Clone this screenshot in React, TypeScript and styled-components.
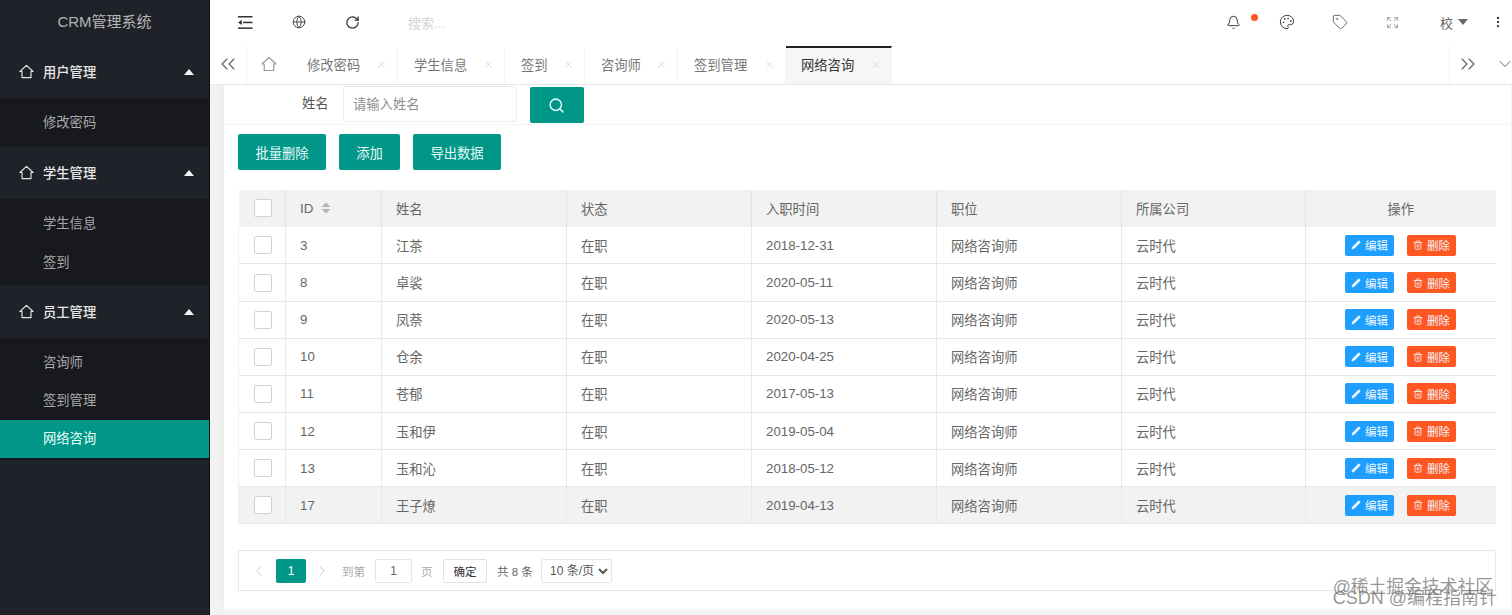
import React from "react";
import styled, { createGlobalStyle } from "styled-components";
import { Bell, Palette, Tag, Globe, RotateCw, Expand, Search, Pencil, Trash2, ChevronsLeft, ChevronsRight, ChevronDown, X, ChevronLeft, ChevronRight, EllipsisVertical } from "lucide-react";

const Global = createGlobalStyle`
  html, body { margin: 0; padding: 0; height: 615px; overflow: hidden; background: #f2f2f2; }
  body, input, select, button { font-family: "Liberation Sans", "Noto Sans CJK SC", sans-serif; }
  * { box-sizing: border-box; }
`;
const Page = styled.div`display: flex; width: 1512px; height: 615px; position: relative; overflow: hidden;`;
const Sidebar = styled.aside`width: 210px; flex: none; background: #20222a; border-right: 1px solid #111; color: #c2c2c2; font-size: 13.3px;`;
const Logo = styled.div`height: 45px; display: flex; align-items: center; justify-content: center; padding-bottom: 5px; font-size: 15px; color: #b4b4b4;`;
const GroupHead = styled.div`height: 53px; display: flex; align-items: center; padding: 0 15px 0 19px; color: #e8e8e8; gap: 9px; font-weight: 500;`;
const Caret = styled.span`margin-left: auto; width: 0; height: 0; border-left: 5.5px solid transparent; border-right: 5.5px solid transparent; border-bottom: 6px solid #f5f5f5;`;
const Sub = styled.div<{ $top?: number; $bottom?: number }>`background: #18191e; padding: ${(p) => p.$top ?? 5}px 0 ${(p) => p.$bottom ?? 5}px;`;
const SubItem = styled.div<{ $active?: boolean; $lift?: number }>`
  height: 38px; display: flex; align-items: center; padding: 0 0 ${(p) => p.$lift ?? 2}px 43px;
  background: ${(p) => (p.$active ? "#009688" : "transparent")};
  color: ${(p) => (p.$active ? "#eafffb" : "#a8a8a8")};
`;
const Main = styled.main`flex: 1; min-width: 0; display: flex; flex-direction: column; background: #f2f2f2;`;
const TopBar = styled.header`height: 46px; flex: none; background: #fff; display: flex; align-items: center; padding: 0 0 2px 28px; color: #555;`;
const IconSlot = styled.span<{ $w: number }>`width: ${(p) => p.$w}px; flex: none; display: flex; align-items: center; justify-content: flex-start; position: relative;`;
const SearchHint = styled.span`font-size: 13px; color: #d4d4d4; width: 818px; flex: none;`;
const Dot = styled.span`position: absolute; left: 25px; top: -1px; width: 7px; height: 7px; border-radius: 50%; background: #ff5722;`;
const User = styled.span`font-size: 13px; color: #666; display: flex; align-items: center; gap: 5px; width: 51px; flex: none;`;
const UserCaret = styled.span`width: 0; height: 0; border-left: 5.5px solid transparent; border-right: 5.5px solid transparent; border-top: 6px solid #666;`;
const TabBar = styled.nav`height: 39px; flex: none; background: #fff; border-bottom: 1px solid #eaeaea; display: flex; color: #777; font-size: 13.3px;`;
const Edge = styled.div<{ $w: number; $line?: "left" | "right" }>`
  width: ${(p) => p.$w}px; flex: none; display: flex; align-items: center; justify-content: center; color: #666; padding-bottom: 2px;
  ${(p) => p.$line === "left" ? "border-left: 1px solid #f2f2f2;" : ""}
  ${(p) => p.$line === "right" ? "border-right: 1px solid #f2f2f2;" : ""}
`;
const DownEdge = styled(Edge)`margin-right: -12px;`;
const HomeTab = styled.div`width: 44px; flex: none; display: flex; align-items: center; justify-content: center; color: #999; padding: 0 1px 2px 0;`;
const TabItem = styled.div<{ $w: number; $active?: boolean }>`
  width: ${(p) => p.$w}px; flex: none; display: flex; align-items: center; padding: 0 0 3px ${(p) => (p.$active ? 15 : 16)}px; position: relative;
  border-right: 1px solid #f4f4f4;
  background: ${(p) => (p.$active ? "#f6f6f6" : "#fff")};
  color: ${(p) => (p.$active ? "#333" : "#777")};
  border-top: 2px solid ${(p) => (p.$active ? "#222" : "transparent")};
`;
const TabClose = styled.span`position: absolute; right: 10px; top: 50%; margin-top: -7px; display: flex; color: #bbb;`;
const Spacer = styled.div`flex: 1;`;
const Area = styled.div`flex: 1; min-height: 0; padding: 0 2px 5px 14px; display: flex;`;
const Card = styled.section`flex: 1; background: #fff; display: flex; flex-direction: column; box-shadow: -3px 0 6px rgba(0,0,0,.02);`;
const FormRow = styled.div`height: 40px; flex: none; border-bottom: 1px solid #f4f4f4; display: flex; align-items: flex-start; padding: 1px 0 0 78px;`;
const FieldLabel = styled.span`font-size: 13.3px; color: #555; line-height: 36px; width: 41px; flex: none;`;
const TextInput = styled.div`width: 174px; height: 36px; border: 1px solid #eee; display: flex; align-items: center; padding: 0 0 1px 9px; font-size: 13.3px; color: #8f8f8f; border-radius: 2px;`;
const SearchBtn = styled.div`width: 54px; height: 36px; margin: 1px 0 0 13px; background: #009688; color: #d8fbf5; border-radius: 2px; display: flex; align-items: center; justify-content: center; padding-right: 2px;`;
const Actions = styled.div`display: flex; padding: 9px 0 0 14px; height: 65px; flex: none;`;
const ActionBtn = styled.div<{ $w: number; $gap: number }>`
  width: ${(p) => p.$w}px; margin-right: ${(p) => p.$gap}px; height: 36px; background: #009688; color: #e9fbf8; border-radius: 2px;
  font-size: 13.3px; display: flex; align-items: center; justify-content: center;
`;
const TableWrap = styled.div`margin: 0 15px 0 14px; flex: none;`;
const Table = styled.table`width: 1257px; border-collapse: collapse; table-layout: fixed; font-size: 13.3px; color: #666;`;
const Th = styled.th<{ $center?: boolean }>`
  height: 36.8px; background: #f2f2f2; font-weight: 400; text-align: ${(p) => (p.$center ? "center" : "left")};
  padding: 0 0 0 ${(p) => (p.$center ? 0 : 14)}px;
  border-left: 1px solid #e4e4e4; &:first-child { border-left: 0; padding: 0; }
`;
const Tr = styled.tr<{ $hover?: boolean }>`
  background: ${(p) => (p.$hover ? "#f2f2f2" : "#fff")};
`;
const Td = styled.td`
  height: 37.15px; padding: 0 0 0 14px; border-left: 1px solid #e8e8e8; border-bottom: 1px solid #e8e8e8;
  &:first-child { border-left: 1px solid #f0f0f0; padding: 0; }
`;
const CheckCell = styled.div`display: flex; justify-content: flex-start; padding-left: 15px;`;
const Check = styled.span`width: 18px; height: 18px; display: block; background: #fff; border: 1px solid #d2d2d2; border-radius: 2px;`;
const HeadId = styled.span`display: inline-flex; align-items: center; gap: 8px;`;
const Sort = styled.svg`display: block;`;
const OpCell = styled.div`display: flex; gap: 13px; padding-left: 25px;`;
const OpBtn = styled.span<{ $bg: string }>`
  width: 49px; height: 21px; border-radius: 2px; background: ${(p) => p.$bg}; color: #f2f8ff; font-size: 11.5px;
  display: flex; align-items: center; justify-content: center; gap: 4px;
`;
const Pager = styled.div`margin: 26px 15px 0 14px; height: 41px; border: 1px solid #e8e8e8; display: flex; align-items: center; padding-left: 11px; font-size: 11.5px; color: #999;`;
const PagerArrow = styled.span<{ $w: number }>`width: ${(p) => p.$w}px; flex: none; display: flex; color: #c2c2c2;`;
const PageCurrent = styled.span`width: 30px; height: 24px; flex: none; background: #009688; color: #fff; border-radius: 2px; font-size: 12px; display: flex; align-items: center; justify-content: center; margin-right: 7px;`;
const PagerText = styled.span<{ $w: number; $dark?: boolean; $indent?: number }>`width: ${(p) => p.$w}px; flex: none; white-space: nowrap; padding-left: ${(p) => p.$indent ?? 0}px; color: ${(p) => (p.$dark ? "#666" : "#aaa")};`;
const PageInput = styled.span`width: 37px; height: 24px; flex: none; border: 1px solid #e6e6e6; border-radius: 2px; color: #666; display: flex; align-items: center; justify-content: center; font-size: 12px;`;
const ConfirmBtn = styled.span`width: 44px; height: 24px; flex: none; border: 1px solid #e2e2e2; border-radius: 2px; color: #333; display: flex; align-items: center; justify-content: center; margin-right: 10px;`;
const SizeSelect = styled.select`width: 71px; height: 24px; flex: none; border: 1px solid #e6e6e6; border-radius: 2px; background: #fff; color: #555; font-size: 12px; padding: 0 0 0 4px;`;
const Watermark = styled.div<{ $top: number; $right: number; $size: number }>`
  position: absolute; top: ${(p) => p.$top}px; right: ${(p) => p.$right}px; font-size: ${(p) => p.$size}px;
  line-height: 20px; white-space: nowrap; color: rgba(110,110,110,.72);
`;

const HomeIcon = ({ size = 15 }: { size?: number }) => (
  <svg width={size} height={size} viewBox="0 0 16 16" fill="none" stroke="currentColor" strokeWidth="1.2" strokeLinejoin="round">
    <path d="M1 8 8 1.5 15 8H12.8V14.5H3.2V8Z" />
  </svg>
);
const FoldIcon = () => (
  <svg width="15" height="13" viewBox="0 0 15 13" fill="#333">
    <rect x="0" y="0" width="14.5" height="1.5" />
    <rect x="5" y="5.7" width="9.5" height="1.5" />
    <rect x="0" y="11.4" width="14.5" height="1.5" />
    <path d="M0 6.5 3.8 4V9Z" />
  </svg>
);

const rows = [
  ["3", "江茶", "2018-12-31"],
  ["8", "卓裟", "2020-05-11"],
  ["9", "凤萘", "2020-05-13"],
  ["10", "仓余", "2020-04-25"],
  ["11", "苍郁", "2017-05-13"],
  ["12", "玉和伊", "2019-05-04"],
  ["13", "玉和沁", "2018-05-12"],
  ["17", "王子燎", "2019-04-13"],
];
const tabs = [
  { t: "修改密码", w: 107 }, { t: "学生信息", w: 107 }, { t: "签到", w: 80 },
  { t: "咨询师", w: 93 }, { t: "签到管理", w: 108 }, { t: "网络咨询", w: 106, active: true },
];
const colWidths = [47, 96, 185, 185, 185, 185, 184, 190];

export default function App() {
  return (
    <Page>
      <Global />
      <Sidebar>
        <Logo>CRM管理系统</Logo>
        <GroupHead><HomeIcon /><span>用户管理</span><Caret /></GroupHead>
        <Sub><SubItem>修改密码</SubItem></Sub>
        <GroupHead><HomeIcon /><span>学生管理</span><Caret /></GroupHead>
        <Sub><SubItem>学生信息</SubItem><SubItem $lift={0}>签到</SubItem></Sub>
        <GroupHead><HomeIcon /><span>员工管理</span><Caret /></GroupHead>
        <Sub $top={6} $bottom={2}><SubItem $lift={4}>咨询师</SubItem><SubItem $lift={3}>签到管理</SubItem><SubItem $active $lift={3}>网络咨询</SubItem></Sub>
      </Sidebar>
      <Main>
        <TopBar>
          <IconSlot $w={54}><FoldIcon /></IconSlot>
          <IconSlot $w={53}><Globe size={14} strokeWidth={1.6} color="#444" /></IconSlot>
          <IconSlot $w={63}><RotateCw size={15} strokeWidth={2} color="#333" /></IconSlot>
          <SearchHint>搜索...</SearchHint>
          <IconSlot $w={53}><Bell size={15} strokeWidth={1.4} color="#222" /><Dot /></IconSlot>
          <IconSlot $w={53}><Palette size={16} strokeWidth={1.4} color="#333" /></IconSlot>
          <IconSlot $w={54}><Tag size={16} strokeWidth={1.3} color="#555" /></IconSlot>
          <IconSlot $w={54}><Expand size={13} strokeWidth={1.3} color="#777" /></IconSlot>
          <User>校<UserCaret /></User>
          <IconSlot $w={16}><EllipsisVertical size={14} strokeWidth={2} color="#333" /></IconSlot>
        </TopBar>
        <TabBar>
          <Edge $w={37} $line="right"><ChevronsLeft size={24} strokeWidth={1.2} /></Edge>
          <HomeTab><HomeIcon size={16} /></HomeTab>
          {tabs.map((tab) => (
            <TabItem key={tab.t} $w={tab.w} $active={tab.active}>
              {tab.t}
              <TabClose><X size={11} strokeWidth={1.1} /></TabClose>
            </TabItem>
          ))}
          <Spacer />
          <Edge $w={37} $line="left"><ChevronsRight size={24} strokeWidth={1.2} /></Edge>
          <DownEdge $w={38}><ChevronDown size={20} strokeWidth={1.2} /></DownEdge>
        </TabBar>
        <Area>
          <Card>
            <FormRow>
              <FieldLabel>姓名</FieldLabel>
              <TextInput>请输入姓名</TextInput>
              <SearchBtn><Search size={17} strokeWidth={2.2} /></SearchBtn>
            </FormRow>
            <Actions>
              <ActionBtn $w={88} $gap={13}>批量删除</ActionBtn>
              <ActionBtn $w={61} $gap={13}>添加</ActionBtn>
              <ActionBtn $w={88} $gap={0}>导出数据</ActionBtn>
            </Actions>
            <TableWrap>
              <Table>
                <colgroup>{colWidths.map((w, i) => <col key={i} style={{ width: w }} />)}</colgroup>
                <thead>
                  <tr>
                    <Th><CheckCell><Check /></CheckCell></Th>
                    <Th>
                      <HeadId>ID
                        <Sort width="10" height="12" viewBox="0 0 10 12" fill="#b5b5b5"><path d="M5 0.5 9.5 5H0.5Z" /><path d="M5 11.5 0.5 7H9.5Z" /></Sort>
                      </HeadId>
                    </Th>
                    <Th>姓名</Th><Th>状态</Th><Th>入职时间</Th><Th>职位</Th><Th>所属公司</Th><Th $center>操作</Th>
                  </tr>
                </thead>
                <tbody>
                  {rows.map((r, i) => (
                    <Tr key={r[0]} $hover={i === 7}>
                      <Td><CheckCell><Check /></CheckCell></Td>
                      <Td>{r[0]}</Td>
                      <Td>{r[1]}</Td>
                      <Td>在职</Td>
                      <Td>{r[2]}</Td>
                      <Td>网络咨询师</Td>
                      <Td>云时代</Td>
                      <Td>
                        <OpCell>
                          <OpBtn $bg="#1e9fff"><Pencil size={10} fill="currentColor" strokeWidth={1} />编辑</OpBtn>
                          <OpBtn $bg="#ff5722"><Trash2 size={10} strokeWidth={2} />删除</OpBtn>
                        </OpCell>
                      </Td>
                    </Tr>
                  ))}
                </tbody>
              </Table>
            </TableWrap>
            <Pager>
              <PagerArrow $w={26}><ChevronLeft size={18} strokeWidth={1.2} /></PagerArrow>
              <PageCurrent>1</PageCurrent>
              <PagerArrow $w={29}><ChevronRight size={18} strokeWidth={1.2} /></PagerArrow>
              <PagerText $w={33}>到第</PagerText>
              <PageInput>1</PageInput>
              <PagerText $w={31} $indent={9}>页</PagerText>
              <ConfirmBtn>确定</ConfirmBtn>
              <PagerText $w={44} $dark>共 8 条</PagerText>
              <SizeSelect defaultValue="10"><option value="10">10 条/页</option></SizeSelect>
            </Pager>
          </Card>
        </Area>
      </Main>
      <Watermark $top={577} $right={19} $size={17.8}>@稀土掘金技术社区</Watermark>
      <Watermark $top={588} $right={15} $size={18}>CSDN @编程指南针</Watermark>
    </Page>
  );
}
